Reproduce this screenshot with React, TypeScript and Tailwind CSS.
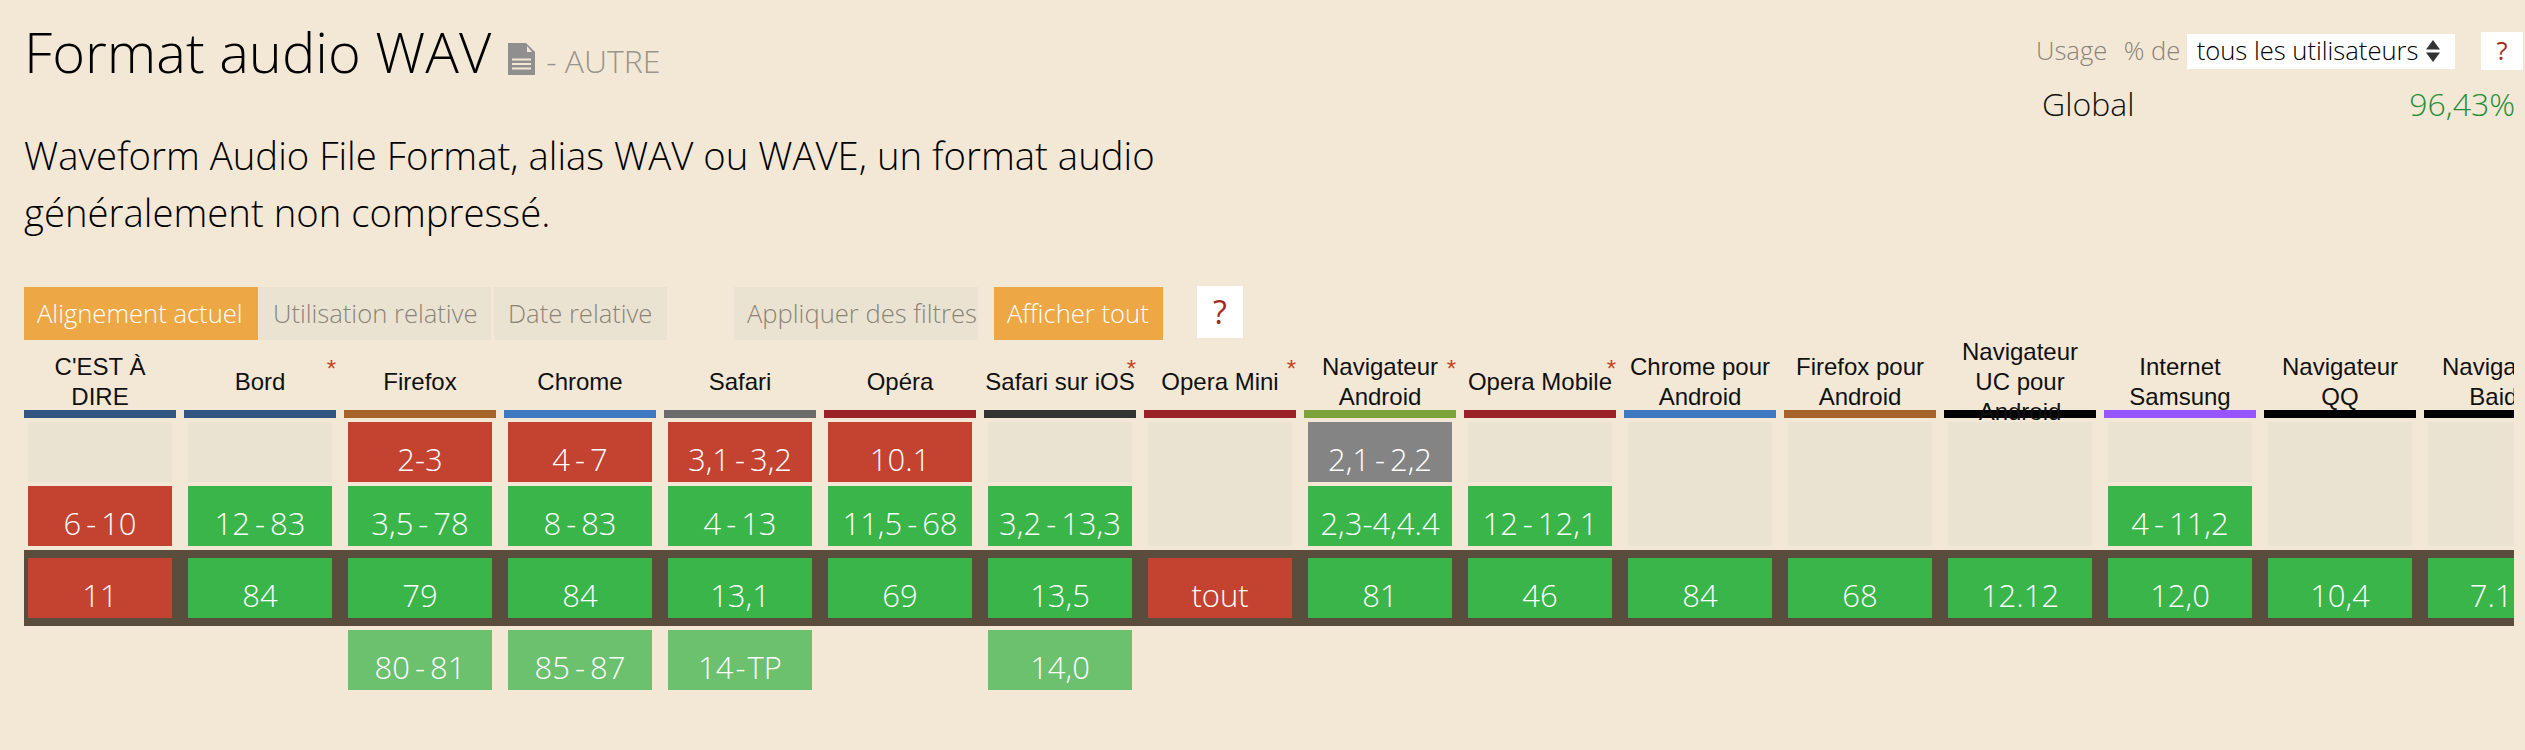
import React from "react";

type Agent = { name: string; bar: string; star?: boolean; a: React.ReactNode; b: React.ReactNode; c: string; d?: React.ReactNode; aColor?: string; bColor?: string; cColor?: string };

function R({ l, r }: { l: string; r: string }) {
  return (
    <>
      {l}
      <span className="mx-[5px]">-</span>
      {r}
    </>
  );
}

const RED = "bg-[#c44230]";
const agents: Agent[] = [
  { name: "C'EST À DIRE", bar: "bg-[#315582]", a: "", b: <R l="6" r="10" />, c: "11", bColor: RED, cColor: RED },
  { name: "Bord", bar: "bg-[#315582]", star: true, a: "", b: <R l="12" r="83" />, c: "84" },
  { name: "Firefox", bar: "bg-[#a6642a]", a: "2-3", b: <R l="3,5" r="78" />, c: "79", d: <R l="80" r="81" />, aColor: RED },
  { name: "Chrome", bar: "bg-[#3f78c0]", a: <R l="4" r="7" />, b: <R l="8" r="83" />, c: "84", d: <R l="85" r="87" />, aColor: RED },
  { name: "Safari", bar: "bg-[#6b6b6b]", a: <R l="3,1" r="3,2" />, b: <R l="4" r="13" />, c: "13,1", d: <>14<span className="mx-[2px]">-</span>TP</>, aColor: RED },
  { name: "Opéra", bar: "bg-[#9b2226]", a: "10.1", b: <R l="11,5" r="68" />, c: "69", aColor: RED },
  { name: "Safari sur iOS", bar: "bg-[#333333]", star: true, a: "", b: <R l="3,2" r="13,3" />, c: "13,5", d: "14,0" },
  { name: "Opera Mini", bar: "bg-[#9b2226]", star: true, a: "", b: "", c: "tout", cColor: RED },
  { name: "Navigateur Android", bar: "bg-[#7ba33a]", star: true, a: <R l="2,1" r="2,2" />, b: "2,3-4,4.4", c: "81", aColor: "bg-[#848484]" },
  { name: "Opera Mobile", bar: "bg-[#9b2226]", star: true, a: "", b: <R l="12" r="12,1" />, c: "46" },
  { name: "Chrome pour Android", bar: "bg-[#3f78c0]", a: "", b: "", c: "84" },
  { name: "Firefox pour Android", bar: "bg-[#a6642a]", a: "", b: "", c: "68" },
  { name: "Navigateur UC pour Android", bar: "bg-black", a: "", b: "", c: "12.12" },
  { name: "Internet Samsung", bar: "bg-[#9655ff]", a: "", b: <R l="4" r="11,2" />, c: "12,0" },
  { name: "Navigateur QQ", bar: "bg-black", a: "", b: "", c: "10,4" },
  { name: "Navigateur Baidu", bar: "bg-black", a: "", b: "", c: "7.12" },
];

const GREEN = "bg-[#39b54a]";
const EMPTY = "bg-[#ebe3d1]";
const openSans = { fontFamily: '"Open Sans", sans-serif' } as const;

function Cell({ text, color }: { text?: React.ReactNode; color: string }) {
  return (
    <div className={`h-[60px] flex items-end justify-center text-[31px] leading-[46px] font-light text-white whitespace-nowrap ${color}`}>
      {text}
    </div>
  );
}

function Btn({ children, active, w, cls = "pl-[13px]" }: { children: React.ReactNode; active?: boolean; w: string; cls?: string }) {
  return (
    <div className={`h-[53px] flex items-center pt-[1px] text-[25.6px] font-light whitespace-nowrap ${active ? "bg-[#eda745] text-white" : "bg-[#ebe3d1] text-[#8a8378]"} ${w} ${cls}`}>
      {children}
    </div>
  );
}

export default function App() {
  return (
    <div className="w-[2525px] h-[750px] overflow-hidden bg-[#f3e8d6] text-[#111]" style={openSans}>
      <div className="flex justify-between h-[287px]">
        <div className="pl-6">
          <h1 className="flex items-end h-[90px] text-[56px] leading-[78px] font-light text-black whitespace-nowrap">
            Format audio WAV
            <svg viewBox="0 0 27 32" className="ml-[17px] mb-[15px] w-[27px] h-[32px]">
              <path d="M0 0H18L27 9V32H0Z" fill="#8f8f8f" />
              <path d="M19 3L24 9H19Z" fill="#f3e8d6" />
              <path d="M4 15.5H23V17.5H4ZM4 20H23V22H4ZM4 24.5H23V26.5H4Z" fill="#f3e8d6" />
            </svg>
            <span className="ml-[11px] mb-[3px] text-[32px] leading-[52px] text-[#9a948a]">- AUTRE</span>
          </h1>
          <p className="mt-[37px] w-[1300px] text-[38.3px] leading-[57px] font-light text-black">
            Waveform Audio File Format, alias WAV ou WAVE, un format audio
            <br />
            généralement non compressé.
          </p>
        </div>
        <div className="w-[490px] pr-[2px] pt-8">
          <div className="flex items-center h-[38px] text-[25.6px] font-light whitespace-nowrap">
            <span className="ml-[1px] w-[88px] text-[#8a8378]">Usage</span>
            <span className="w-[63px] text-[#8a8378]">% de</span>
            <div className="w-[269px] h-[35px] bg-white flex items-center pl-[10px] text-black">
              tous les utilisateurs
              <svg viewBox="0 0 14 22" className="ml-[8px] w-[14px] h-[22px] text-[#333]">
                <path d="M7 0L14 9.5H0ZM0 12.5H14L7 22Z" fill="currentColor" />
              </svg>
            </div>
            <div className="ml-[26px] w-[42px] h-[38px] bg-white flex items-center justify-center font-normal text-[#a5281a]">?</div>
          </div>
          <div className="flex justify-between mt-3 pl-[7px] pr-[8px] text-[32px] leading-[44px] font-light">
            <span>Global</span>
            <span className="text-[#1f8f35]">96,43%</span>
          </div>
        </div>
      </div>

      <div className="flex pl-6">
        <Btn active w="w-[234px]">Alignement actuel</Btn>
        <Btn w="w-[232px]" cls="ml-[1px] pl-[14px]">Utilisation relative</Btn>
        <Btn w="w-[173px]" cls="ml-[3px] pl-[14px]">Date relative</Btn>
        <Btn w="w-[244px]" cls="ml-[67px] pl-[13px]">Appliquer des filtres</Btn>
        <Btn active w="w-[169px]" cls="ml-[16px] pl-[13px]">Afficher tout</Btn>
        <div className="ml-[34px] -mt-[1px] w-[46px] h-[52px] bg-white flex items-center justify-center text-[32px] font-normal text-[#a5281a]">?</div>
      </div>

      <div className="ml-6 w-[2490px] h-[410px] overflow-hidden">
        <div className="flex gap-2 h-[70px] pt-[14px] w-max">
          {agents.map((a) => (
            <div key={a.name} className="relative w-[152px] h-[56px] shrink-0 flex items-center justify-center text-center text-[24px] leading-[30px] text-[#111]" style={{ fontFamily: '"Liberation Sans", Arial, sans-serif' }}>
              <span className="relative z-10">{a.name}</span>
              {a.star && <span className="absolute right-0 top-[3px] text-[#c2441c] leading-[24px]">*</span>}
            </div>
          ))}
        </div>
        <div className="flex gap-2 h-2 w-max">
          {agents.map((a) => (
            <div key={a.name} className={`w-[152px] h-2 shrink-0 ${a.bar}`} />
          ))}
        </div>
        <div className="flex gap-2 mt-1 w-max">
          {agents.map((a) => (
            <div key={a.name} className="w-[152px] shrink-0 px-1 flex flex-col gap-1">
              {!a.a && !a.b ? (
                <div className={`h-[124px] ${EMPTY}`} />
              ) : (
                <>
                  <Cell text={a.a} color={a.aColor ?? (a.a ? GREEN : EMPTY)} />
                  <Cell text={a.b} color={a.bColor ?? (a.b ? GREEN : EMPTY)} />
                </>
              )}
            </div>
          ))}
        </div>
        <div className="flex gap-2 mt-1 py-2 w-max bg-[#5b4d3d]">
          {agents.map((a) => (
            <div key={a.name} className="w-[152px] shrink-0 px-1">
              <Cell text={a.c} color={a.cColor ?? GREEN} />
            </div>
          ))}
        </div>
        <div className="flex gap-2 mt-1 w-max">
          {agents.map((a) => (
            <div key={a.name} className="w-[152px] shrink-0 px-1">
              <Cell text={a.d} color={a.d ? "bg-[#6cc16e]" : ""} />
            </div>
          ))}
        </div>
      </div>
    </div>
  );
}
